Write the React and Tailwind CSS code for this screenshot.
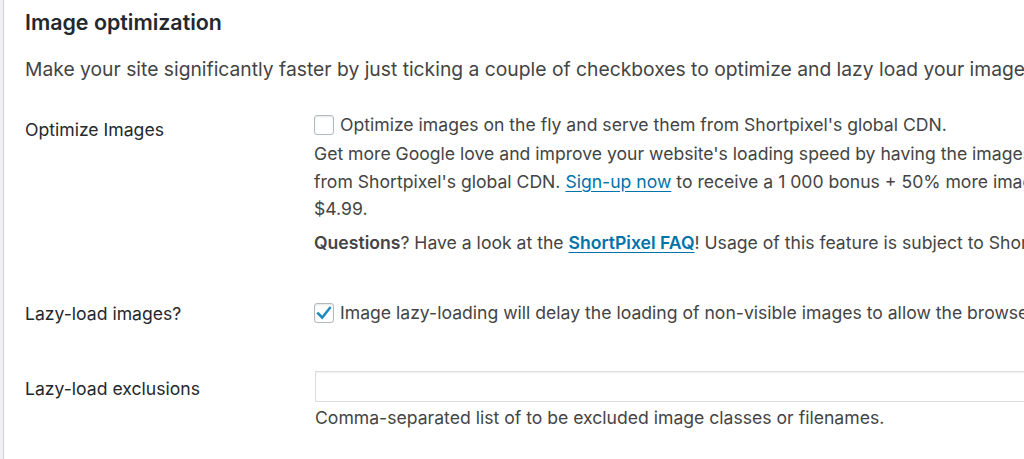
function Checkbox({ checked = false }) {
  return (
    <span className="flex h-[20px] w-[20px] shrink-0 items-center justify-center rounded-[3px] border border-[#b4b9be] bg-white shadow-[inset_0_1px_2px_rgba(0,0,0,0.1)]">
      {checked && (
        <svg viewBox="0 0 20 20" className="h-[18px] w-[18px]">
          <path d="M3.5 10.5 L8 15 L16.5 4.5" fill="none" stroke="#1e8cbe" strokeWidth="2.8" strokeLinecap="square" />
        </svg>
      )}
    </span>
  )
}

export default function App() {
  return (
    <div className="h-[459px] overflow-hidden bg-[#f1f1f1] pl-[3px] font-['Inter','Liberation_Sans',sans-serif]">
      <div className="h-full overflow-hidden border-l border-[#ccd0d4] bg-white pl-[21px] text-[17.6px] text-[#444]">
        <h2 className="pt-[8px] text-[21.4px] font-semibold leading-[28px] text-[#23282d]">Image optimization</h2>
        <p className="mt-[19px] whitespace-nowrap text-[19.3px] leading-[28px]">
          Make your site significantly faster by just ticking a couple of checkboxes to optimize and lazy load your images.
        </p>

        {/* Optimize images */}
        <div className="flex">
          <div className="w-[289px] shrink-0 pt-[33px] leading-[28px] text-[#23282d]">Optimize Images</div>
          <div className="pt-[27px] whitespace-nowrap">
            <label className="flex h-[30px] items-center gap-[6px]">
              <Checkbox />
              <span>Optimize images on the fly and serve them from Shortpixel's global CDN.</span>
            </label>
            <p className="leading-[27.5px]">
              Get more Google love and improve your website's loading speed by having the images optimized
              <br />
              from Shortpixel's global CDN.{" "}
              <a href="#" className="text-[#0073aa] underline underline-offset-[3px]">Sign-up now</a> to receive a 1 000 bonus + 50% more images
              <br />
              $4.99.
            </p>
            <p className="mt-[6px] leading-[27.5px]">
              <strong className="font-semibold">Questions</strong>? Have a look at the{" "}
              <a href="#" className="font-semibold text-[#0073aa] underline underline-offset-[3px]">ShortPixel FAQ</a>! Usage of this feature is subject to ShortPixel's
            </p>
          </div>
        </div>

        {/* Lazy load */}
        <div className="flex">
          <div className="w-[289px] shrink-0 pt-[44px] leading-[28px] text-[#23282d]">Lazy-load images?</div>
          <div className="pt-[42px] whitespace-nowrap">
            <label className="flex h-[30px] items-center gap-[6px]">
              <Checkbox checked />
              <span>Image lazy-loading will delay the loading of non-visible images to allow the browser</span>
            </label>
          </div>
        </div>

        {/* Exclusions */}
        <div className="flex">
          <div className="w-[290px] shrink-0 pt-[47px] leading-[28px] text-[#23282d]">Lazy-load exclusions</div>
          <div className="flex-1 pt-[43px]">
            <input
              type="text"
              className="block h-[31px] w-[760px] border border-[#ddd] bg-white shadow-[inset_0_1px_2px_rgba(0,0,0,0.07)] outline-none"
            />
            <p className="mt-[2px] whitespace-nowrap leading-[27.5px]">Comma-separated list of to be excluded image classes or filenames.</p>
          </div>
        </div>
      </div>
    </div>
  )
}
